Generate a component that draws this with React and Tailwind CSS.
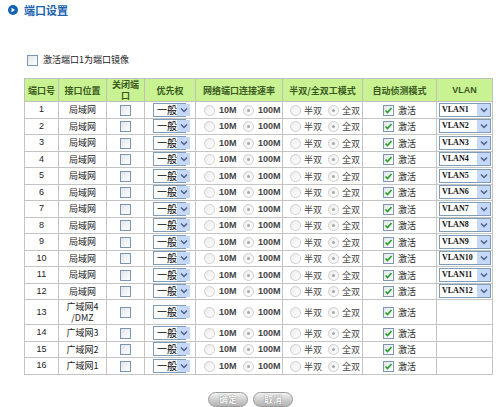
import React from 'react';

const ports = [
  { n: 1, loc: '局域网', vlan: 'VLAN1' },
  { n: 2, loc: '局域网', vlan: 'VLAN2' },
  { n: 3, loc: '局域网', vlan: 'VLAN3' },
  { n: 4, loc: '局域网', vlan: 'VLAN4' },
  { n: 5, loc: '局域网', vlan: 'VLAN5' },
  { n: 6, loc: '局域网', vlan: 'VLAN6' },
  { n: 7, loc: '局域网', vlan: 'VLAN7' },
  { n: 8, loc: '局域网', vlan: 'VLAN8' },
  { n: 9, loc: '局域网', vlan: 'VLAN9' },
  { n: 10, loc: '局域网', vlan: 'VLAN10' },
  { n: 11, loc: '局域网', vlan: 'VLAN11' },
  { n: 12, loc: '局域网', vlan: 'VLAN12' },
  { n: 13, loc: '广域网4\n/DMZ', tall: true },
  { n: 14, loc: '广域网3' },
  { n: 15, loc: '广域网2' },
  { n: 16, loc: '广域网1' },
];

function Box({ checked }) {
  return (
    <span className="inline-flex w-[11px] h-[11px] border border-[#7b96b2] bg-gradient-to-br from-[#e2e6ea] to-white items-center justify-center align-middle shrink-0">
      {checked && (
        <svg width="9" height="9" viewBox="0 0 9 9">
          <path d="M1.5 4.5 L3.5 6.5 L7.5 2" fill="none" stroke="#21a121" strokeWidth="1.6" />
        </svg>
      )}
    </span>
  );
}

function Radio({ on }) {
  return (
    <span className="inline-flex w-[11px] h-[11px] rounded-full border border-[#cfcfcf] bg-gradient-to-br from-[#ececec] to-white items-center justify-center shrink-0">
      {on && <span className="w-[3px] h-[3px] rounded-full bg-[#a8a8a8]" />}
    </span>
  );
}

function Arrow() {
  return (
    <span className="flex w-[13px] h-[12px] bg-[#c5d8f8] items-center justify-center shrink-0">
      <svg width="8" height="6" viewBox="0 0 8 6">
        <path d="M1 1.5 L4 4.5 L7 1.5" fill="none" stroke="#4d6185" strokeWidth="1.5" />
      </svg>
    </span>
  );
}

function Sel({ text, w, serif }) {
  return (
    <span className={`inline-flex ${w} h-[14px] border border-[#7f9db9] bg-white items-center justify-between align-middle whitespace-nowrap`}>
      <span className={serif ? 'pl-[2px] text-[8px] font-bold text-[#111] font-["Liberation_Serif",serif] leading-none' : 'pl-[3px] text-[10px] text-black leading-none'}>{text}</span>
      <Arrow />
    </span>
  );
}

export default function App() {
  const th = 'border border-[#bfbfbf] font-bold text-[#3a5a1e] text-[9px] leading-[11px] text-center px-0 whitespace-nowrap';
  const td = 'border border-[#c4c4c4] text-center text-[9px] leading-[11px] text-[#222] p-0 whitespace-nowrap';
  return (
    <div className='w-[500px] h-[407px] bg-white font-["Noto_Sans_CJK_SC",sans-serif] relative overflow-hidden'>
      <div className="flex items-center gap-[6px] pl-[8px] h-[19px]">
        <span className="flex w-[10px] h-[10px] rounded-full bg-[#1462b4] items-center justify-center">
          <svg width="6" height="6" viewBox="0 0 6 6"><path d="M1.5 0.8 L5 3 L1.5 5.2 Z" fill="#fff" /></svg>
        </span>
        <span className="text-[11px] font-bold text-[#1a62b0] leading-[14px]">端口设置</span>
      </div>

      <div className="flex items-center gap-[5px] pl-[27px] mt-[34px] h-[14px] text-[9px] text-[#222] leading-[12px]">
        <Box />
        <span>激活端口1为端口镜像</span>
      </div>

      <table className="ml-[24px] mt-[11px] border-collapse w-[468px] table-fixed">
        <colgroup>
          <col className="w-[34px]" />
          <col className="w-[48px]" />
          <col className="w-[38px]" />
          <col className="w-[51px]" />
          <col className="w-[87px]" />
          <col className="w-[80px]" />
          <col className="w-[74px]" />
          <col className="w-[56px]" />
        </colgroup>
        <thead>
          <tr className="bg-[#c9f293] h-[23px]">
            <th className={th}>端口号</th>
            <th className={th}>接口位置</th>
            <th className={th}>关闭端<br />口</th>
            <th className={th}>优先权</th>
            <th className={th}>网络端口连接速率</th>
            <th className={th}>半双/全双工模式</th>
            <th className={th}>自动侦测模式</th>
            <th className={`${th} font-["Liberation_Sans",sans-serif]`}>VLAN</th>
          </tr>
        </thead>
        <tbody>
          {ports.map((p) => (
            <tr key={p.n} className={p.tall ? 'h-[25px]' : 'h-[16.5px]'}>
              <td className={`${td} font-["Liberation_Sans",sans-serif]`}>{p.n}</td>
              <td className={`${td} whitespace-pre-line`}>{p.loc}</td>
              <td className={td}><Box /></td>
              <td className={`${td} text-left pl-[8px]`}><Sel text="一般" w="w-[33px]" /></td>
              <td className={`${td} text-left pl-[8px]`}>
                <span className='inline-flex items-center gap-[4px] align-middle font-["Liberation_Sans",sans-serif] text-[9px] font-bold text-[#444]'>
                  <Radio /><span className="w-[20px]">10M</span>
                  <Radio on /><span>100M</span>
                </span>
              </td>
              <td className={`${td} text-left pl-[7px]`}>
                <span className="inline-flex items-center gap-[3px] align-middle text-[#444]">
                  <Radio /><span className="w-[21px]">半双</span>
                  <Radio on /><span>全双</span>
                </span>
              </td>
              <td className={td}>
                <span className="inline-flex items-center gap-[4px] align-middle"><Box checked /><span>激活</span></span>
              </td>
              <td className={`${td} text-left pl-[2px]`}>
                {p.vlan && <Sel text={p.vlan} w="w-[52px]" serif />}
              </td>
            </tr>
          ))}
        </tbody>
      </table>

      <div className="flex justify-center gap-[5px] mt-[17px] pl-[1px]">
        {['确定', '取消'].map((t) => (
          <span key={t} className="inline-flex w-[40px] h-[15px] rounded-full border border-[#9a9a9a] bg-gradient-to-b from-[#f2f2f2] via-[#d0d0d0] to-[#b4b4b4] items-center justify-center text-[9px] font-bold text-[#f6f6f6] leading-[11px] [text-shadow:0_0_1px_#555]">
            {t}
          </span>
        ))}
      </div>
    </div>
  );
}
